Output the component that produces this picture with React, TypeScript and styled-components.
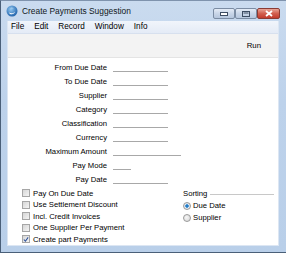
import React from 'react';
import styled, { createGlobalStyle } from 'styled-components';

const GlobalStyle = createGlobalStyle`
  html, body {
    margin: 0;
    padding: 0;
    overflow: hidden;
  }
  body {
    font-family: 'Liberation Sans', Arial, sans-serif;
  }
`;

const Window = styled.div`
  width: 286px;
  height: 253px;
  box-sizing: border-box;
  display: flex;
  flex-direction: column;
  background: linear-gradient(180deg, #cadbef 0%, #bdd2eb 40%, #b9cfe9 100%);
  border: 1px solid #4a5f78;
  border-top-color: #7f93ad;
  border-right: none;
`;

const TitleBar = styled.div`
  height: 20px;
  display: flex;
  align-items: center;
  padding-left: 5px;
  flex-shrink: 0;
`;

const Title = styled.span`
  margin-left: 4px;
  font-size: 8.4px;
  color: #111822;
  flex: 1;
`;

const Controls = styled.div`
  display: flex;
  align-self: flex-start;
  margin-top: 7px;
  margin-right: 6px;
`;

const CtlButton = styled.div<{ $close?: boolean }>`
  width: ${({ $close }) => ($close ? '23px' : '22px')};
  height: 11px;
  box-sizing: border-box;
  border: 1px solid ${({ $close }) => ($close ? '#8a3b34' : '#7b8ca3')};
  border-radius: 2px;
  display: flex;
  align-items: center;
  justify-content: center;
  background: ${({ $close }) =>
    $close
      ? 'linear-gradient(180deg, #e8a496 0%, #d2604f 50%, #c23b2c 100%)'
      : 'linear-gradient(180deg, #e3ebf6 0%, #c9d6e8 50%, #b6c7de 100%)'};
`;

const Frame = styled.div`
  flex: 1;
  display: flex;
  padding: 0 7px 6px 6px;
  min-height: 0;
`;

const Client = styled.div`
  flex: 1;
  display: flex;
  flex-direction: column;
  background: #ffffff;
  border: 1px solid #dce6f3;
  border-top: none;
`;

const MenuBar = styled.div`
  height: 12px;
  display: flex;
  align-items: center;
  gap: 10px;
  padding-left: 3px;
  background: linear-gradient(180deg, #f1f5fb 0%, #e4ebf6 100%);
  border-bottom: 1px solid #d7e0ee;
`;

const MenuItem = styled.span`
  font-size: 8.2px;
  color: #000;
`;

const Toolbar = styled.div`
  height: 24px;
  display: flex;
  align-items: center;
  justify-content: flex-end;
  padding-right: 17px;
  background: #f3f3f3;
  border-bottom: 1px solid #e4e4e4;
`;

const ToolText = styled.span`
  font-size: 7.8px;
  color: #000;
`;

const Form = styled.div`
  padding-top: 3px;
  display: grid;
  grid-template-columns: 99px auto;
  column-gap: 6px;
  grid-auto-rows: 14px;
`;

const Label = styled.span`
  font-size: 7.7px;
  color: #000;
  text-align: right;
  line-height: 14px;
  white-space: nowrap;
`;

const Field = styled.span<{ $w: number }>`
  width: ${({ $w }) => $w}px;
  height: 10px;
  border-bottom: 1px solid #a8a8a8;
`;

const Lower = styled.div`
  display: flex;
  padding: 1px 0 0 14px;
`;

const Checks = styled.div`
  display: flex;
  flex-direction: column;
  width: 161px;
`;

const CheckRow = styled.label`
  height: 11.5px;
  display: flex;
  align-items: center;
  gap: 3px;
  font-size: 7.7px;
  color: #000;
`;

const Box = styled.span`
  width: 8px;
  height: 8px;
  box-sizing: border-box;
  border: 1px solid #a6a6a6;
  background: linear-gradient(135deg, #d6d6d6 0%, #f4f4f4 100%);
  display: flex;
  align-items: center;
  justify-content: center;
`;

const Sorting = styled.div`
  display: flex;
  flex-direction: column;
`;

const GroupHead = styled.div`
  height: 12px;
  display: flex;
  align-items: center;
  gap: 3px;
  font-size: 7.7px;
  color: #000;
`;

const GroupLine = styled.span`
  width: 64px;
  border-top: 1px solid #c8c8c8;
  margin-top: 2px;
`;

const RadioRow = styled.label`
  height: 12px;
  display: flex;
  align-items: center;
  gap: 2px;
  font-size: 7.7px;
  color: #000;
`;

const Dot = styled.span<{ $on?: boolean }>`
  width: 8px;
  height: 8px;
  box-sizing: border-box;
  border-radius: 50%;
  border: 1px solid #9a9a9a;
  background: ${({ $on }) =>
    $on
      ? 'radial-gradient(circle at 50% 50%, #1f6fb5 0%, #2b86d0 35%, #e8eef5 45%, #d0d6dc 100%)'
      : 'radial-gradient(circle at 40% 40%, #f6f6f6 0%, #d4d4d4 100%)'};
`;

const fields: [string, number][] = [
  ['From Due Date', 55],
  ['To Due Date', 55],
  ['Supplier', 55],
  ['Category', 55],
  ['Classification', 55],
  ['Currency', 55],
  ['Maximum Amount', 68],
  ['Pay Mode', 18],
  ['Pay Date', 55],
];

const checks: [string, boolean][] = [
  ['Pay On Due Date', false],
  ['Use Settlement Discount', false],
  ['Incl. Credit Invoices', false],
  ['One Supplier Per Payment', false],
  ['Create part Payments', true],
];

const AppIcon = () => (
  <svg width="12" height="12" viewBox="0 0 12 12">
    <defs>
      <radialGradient id="ig" cx="40%" cy="35%" r="70%">
        <stop offset="0%" stopColor="#8fc6f0" />
        <stop offset="100%" stopColor="#1d5fa8" />
      </radialGradient>
    </defs>
    <circle cx="6" cy="6" r="5.5" fill="url(#ig)" />
    <path d="M3 7.5 C3.5 10 8.5 10 9 6.5 C8 8.5 5 8.7 3 7.5 Z" fill="#ffffff" />
    <path d="M4 3.2 C5 2.4 7 2.5 7.8 3.4 C6.5 3 5 3.2 4 3.2 Z" fill="#e6f2fc" />
  </svg>
);

const App: React.FC = () => {
  return (
    <>
      <GlobalStyle />
      <Window>
        <TitleBar>
          <AppIcon />
          <Title>Create Payments Suggestion</Title>
          <Controls>
            <CtlButton>
              <svg width="8" height="4" viewBox="0 0 8 4">
                <rect x="0.5" y="0.5" width="7" height="3" fill="#fff" stroke="#3d4d63" />
              </svg>
            </CtlButton>
            <CtlButton>
              <svg width="8" height="6" viewBox="0 0 8 6">
                <rect x="0.5" y="0.5" width="7" height="5" fill="none" stroke="#3d4d63" />
                <rect x="1.5" y="1.5" width="5" height="1" fill="#3d4d63" />
              </svg>
            </CtlButton>
            <CtlButton $close>
              <svg width="8" height="7" viewBox="0 0 8 7">
                <path d="M1 1 L7 6 M7 1 L1 6" stroke="#fff" strokeWidth="1.8" />
              </svg>
            </CtlButton>
          </Controls>
        </TitleBar>
        <Frame>
          <Client>
            <MenuBar>
              {['File', 'Edit', 'Record', 'Window', 'Info'].map((m) => (
                <MenuItem key={m}>{m}</MenuItem>
              ))}
            </MenuBar>
            <Toolbar>
              <ToolText>Run</ToolText>
            </Toolbar>
            <Form>
              {fields.map(([label, w]) => (
                <React.Fragment key={label}>
                  <Label>{label}</Label>
                  <Field $w={w} />
                </React.Fragment>
              ))}
            </Form>
            <Lower>
              <Checks>
                {checks.map(([label, on]) => (
                  <CheckRow key={label}>
                    <Box>
                      {on && (
                        <svg width="7" height="7" viewBox="0 0 7 7">
                          <path d="M1 3.5 L2.8 5.5 L6 1" fill="none" stroke="#2a4f9a" strokeWidth="1.2" />
                        </svg>
                      )}
                    </Box>
                    {label}
                  </CheckRow>
                ))}
              </Checks>
              <Sorting>
                <GroupHead>
                  Sorting
                  <GroupLine />
                </GroupHead>
                <RadioRow>
                  <Dot $on />
                  Due Date
                </RadioRow>
                <RadioRow>
                  <Dot />
                  Supplier
                </RadioRow>
              </Sorting>
            </Lower>
          </Client>
        </Frame>
      </Window>
    </>
  );
};

export default App;
